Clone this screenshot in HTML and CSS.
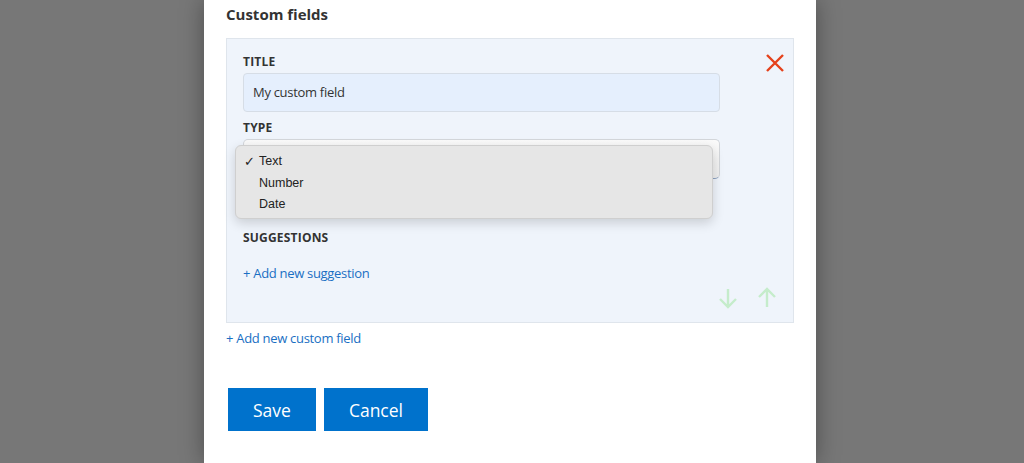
FILE: index.html
```html
<!DOCTYPE html>
<html lang="en">
<head>
  <meta charset="UTF-8">
  <title>Custom fields</title>
  <link rel="stylesheet" href="styles.css">
</head>
<body>
  <div class="backdrop">
    <div class="modal">
      <h2 class="section-title">Custom fields</h2>
      <div class="field-card">
        <button class="remove-btn" title="Remove">
          <svg width="20" height="20" viewBox="0 0 20 20"><path d="M2 2 L18 18 M18 2 L2 18" stroke="#e5411b" stroke-width="2.4" fill="none"/></svg>
        </button>
        <label class="field-label">Title</label>
        <div class="text-input">My custom field</div>
        <label class="field-label">Type</label>
        <div class="select-wrap">
          <div class="select-box"></div>
          <ul class="select-menu">
            <li><span class="check">✓</span>Text</li>
            <li>Number</li>
            <li>Date</li>
          </ul>
        </div>
        <label class="field-label suggestions">Suggestions</label>
        <a class="add-link">+ Add new suggestion</a>
        <div class="move-row">
          <svg width="22" height="22" viewBox="0 0 22 22"><path d="M11 2 V20 M3 12 L11 20 L19 12" stroke="#c5eccb" stroke-width="2.4" fill="none"/></svg>
          <svg width="22" height="22" viewBox="0 0 22 22"><path d="M11 20 V2 M3 10 L11 2 L19 10" stroke="#c5eccb" stroke-width="2.4" fill="none"/></svg>
        </div>
      </div>
      <a class="add-link add-field">+ Add new custom field</a>
      <div class="actions">
        <button class="btn">Save</button>
        <button class="btn">Cancel</button>
      </div>
    </div>
  </div>
</body>
</html>
```
FILE: styles.css
```css
/* Page */
html, body {
  margin: 0;
  padding: 0;
  height: 100%;
  overflow: hidden;
}
body {
  font-family: "Open Sans", "Liberation Sans", Arial, sans-serif;
  background-color: #777;
  color: #333;
}
.backdrop {
  display: flex;
  justify-content: center;
  height: 100%;
  padding-right: 4px;
}

/* Modal */
.modal {
  width: 612px;
  box-sizing: border-box;
  background: #fff;
  padding: 3px 22px 0 22px;
  box-shadow: 0 0 22px rgba(0,0,0,0.35);
}
.section-title {
  margin: 0 0 13px 0;
  font-size: 15px;
  line-height: 22px;
  font-weight: 700;
  color: #333;
}

/* Field card */
.field-card {
  position: relative;
  background: #eff4fb;
  border: 1px solid #dfe5ec;
  padding: 15px 16px 13px 16px;
  display: flex;
  flex-direction: column;
  align-items: flex-start;
}
.remove-btn {
  position: absolute;
  top: 14px;
  right: 8px;
  border: none;
  background: none;
  padding: 0;
  width: 20px;
  height: 20px;
}
.field-label {
  font-size: 12px;
  line-height: 16px;
  font-weight: 700;
  text-transform: uppercase;
  letter-spacing: 0.2px;
  color: #333;
  margin-bottom: 3px;
}
.text-input {
  width: 477px;
  height: 39px;
  box-sizing: border-box;
  border: 1px solid #d6dde6;
  border-radius: 4px;
  background: #e5effd;
  font-size: 13px;
  letter-spacing: -0.3px;
  line-height: 37px;
  padding-left: 9px;
  margin-bottom: 8px;
}
.select-wrap {
  position: relative;
  width: 477px;
}
.select-box {
  height: 40px;
  box-sizing: border-box;
  border: 1px solid #d3d6da;
  border-bottom-color: #8ea3c0;
  border-radius: 5px;
  background: linear-gradient(#fafafa, #ededed);
}
.select-menu {
  position: absolute;
  top: 6px;
  left: -8px;
  width: 478px;
  height: 74px;
  box-sizing: border-box;
  margin: 0;
  padding: 5px 0 0 0;
  list-style: none;
  background: #e6e6e6;
  border: 1px solid #cfcfcf;
  border-radius: 6px;
  box-shadow: 0 4px 12px rgba(0,0,0,0.16);
  font-family: "Liberation Sans", Arial, sans-serif;
  font-size: 12.5px;
  color: #222;
}
.select-menu li {
  position: relative;
  height: 21.5px;
  line-height: 21px;
  padding-left: 23px;
}
.check {
  position: absolute;
  left: 8px;
  font-family: "DejaVu Sans", sans-serif;
  font-size: 13px;
  font-weight: 700;
}
.suggestions {
  margin-top: 51px;
  margin-bottom: 17px;
}
.add-link {
  font-size: 13px;
  letter-spacing: -0.3px;
  line-height: 20px;
  color: #1a6fc3;
  cursor: pointer;
}
.move-row {
  align-self: flex-end;
  display: flex;
  gap: 17px;
  margin-top: 4px;
  margin-right: -1px;
}
.move-row svg {
  display: block;
}

/* Below the card */
.add-field {
  display: block;
  margin-top: 5px;
}
.actions {
  display: flex;
  gap: 8px;
  margin-top: 40px;
  padding-left: 2px;
}
.btn {
  height: 43px;
  padding: 0 25px;
  border: none;
  background: #0072cc;
  color: #fff;
  font-family: "Open Sans", "Liberation Sans", Arial, sans-serif;
  font-size: 17.5px;
}
```
